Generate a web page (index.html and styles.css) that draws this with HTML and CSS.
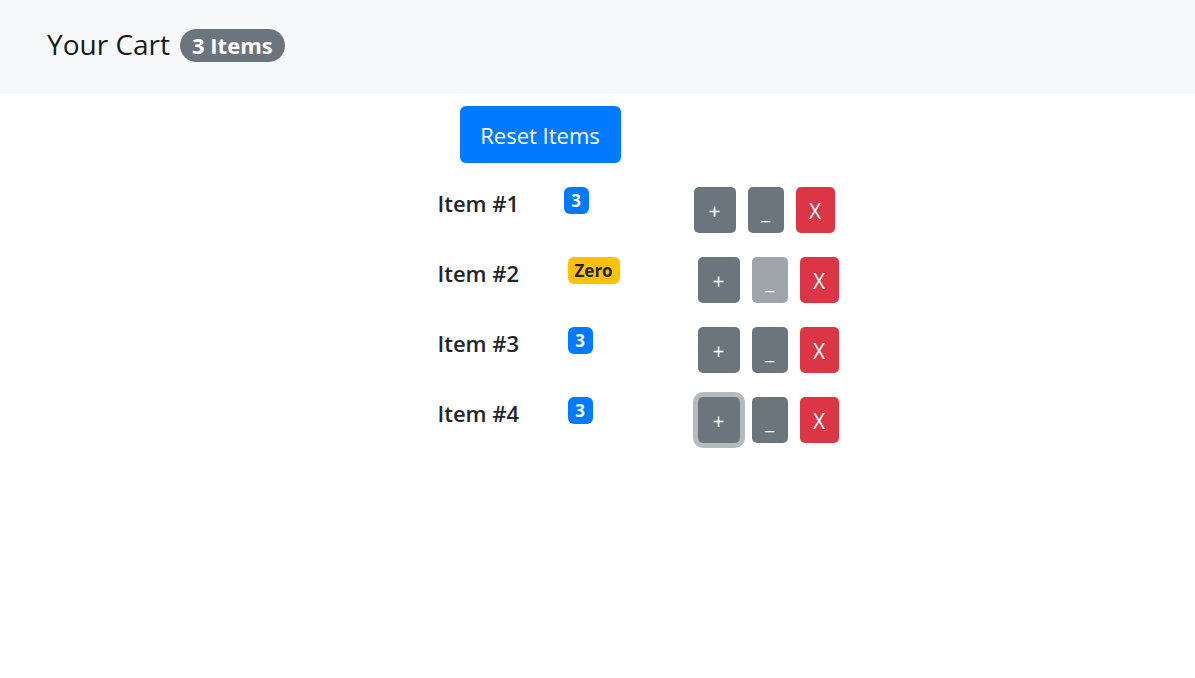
FILE: index.html
```html
<!DOCTYPE html>
<html lang="en">
<head>
<meta charset="utf-8">
<meta name="viewport" content="width=device-width, initial-scale=1">
<title>Your Cart</title>
<link rel="stylesheet" href="styles.css">
</head>
<body>
<header class="navbar">
  <h1 class="brand">Your Cart</h1>
  <span class="pill">3 Items</span>
</header>
<main class="cart">
  <button class="btn reset" type="button">Reset Items</button>
  <ul class="items">
    <li class="item">
      <h2 class="name">Item #1</h2>
      <span class="count"><span class="badge">3</span></span>
      <span class="actions">
        <button class="btn plus" type="button" aria-label="Add one Item #1">+</button>
        <button class="btn minus" type="button" aria-label="Remove one Item #1">_</button>
        <button class="btn delete" type="button" aria-label="Delete Item #1">X</button>
      </span>
    </li>
    <li class="item">
      <h2 class="name">Item #2</h2>
      <span class="count"><span class="badge zero">Zero</span></span>
      <span class="actions">
        <button class="btn plus" type="button" aria-label="Add one Item #2">+</button>
        <button class="btn minus" type="button" aria-label="Remove one Item #2" disabled>_</button>
        <button class="btn delete" type="button" aria-label="Delete Item #2">X</button>
      </span>
    </li>
    <li class="item">
      <h2 class="name">Item #3</h2>
      <span class="count"><span class="badge">3</span></span>
      <span class="actions">
        <button class="btn plus" type="button" aria-label="Add one Item #3">+</button>
        <button class="btn minus" type="button" aria-label="Remove one Item #3">_</button>
        <button class="btn delete" type="button" aria-label="Delete Item #3">X</button>
      </span>
    </li>
    <li class="item">
      <h2 class="name">Item #4</h2>
      <span class="count"><span class="badge">3</span></span>
      <span class="actions">
        <button class="btn plus focused" type="button" aria-label="Add one Item #4">+</button>
        <button class="btn minus" type="button" aria-label="Remove one Item #4">_</button>
        <button class="btn delete" type="button" aria-label="Delete Item #4">X</button>
      </span>
    </li>
  </ul>
</main>
</body>
</html>
```
FILE: styles.css
```css
* {
  box-sizing: border-box;
}

body {
  min-height: 100vh;
  margin: 0;
  font-family: "Segoe UI", "Open Sans", "Noto Sans", sans-serif;
  color: #212529;
  background: #fff;
}

.navbar {
  display: flex;
  align-items: flex-start;
  gap: 10px;
  padding: 23px 47px 29px;
  background: #f8f9fa;
}

.brand {
  margin: 0;
  font-size: 28px;
  font-weight: 400;
  line-height: 42px;
  color: #16181a;
}

.pill {
  margin-top: 6px;
  padding: 0 12px;
  border-radius: 17px;
  font-size: 22px;
  font-weight: 700;
  line-height: 33px;
  color: #fff;
  background: #6c757d;
}

.cart {
  width: fit-content;
  margin: 12px auto 0;
  padding: 0 0 24px 81px;
}

.btn {
  display: block;
  height: 46px;
  padding: 2px 0 0;
  border: 0;
  border-radius: 5px;
  font-family: inherit;
  font-size: 21px;
  line-height: 44px;
  color: #fff;
  background: #6c757d;
}

.reset {
  width: 161px;
  height: 57px;
  margin-left: 22px;
  border-radius: 6px;
  font-size: 22px;
  line-height: 55px;
  background: #007bff;
}

.items {
  display: grid;
  gap: 24px;
  margin: 24px 0 0;
  padding: 0;
  list-style: none;
}

.item {
  display: grid;
  grid-template-columns: 130px 130px auto;
  align-items: start;
}

.item:first-child {
  grid-template-columns: 126px 130px auto;
}

.name {
  margin: 0;
  font-size: 22px;
  font-weight: 600;
  line-height: 32px;
}

.count {
  display: flex;
}

.badge {
  min-width: 25px;
  padding: 0 7px;
  border-radius: 6px;
  font-size: 17px;
  font-weight: 700;
  line-height: 27px;
  text-align: center;
  color: #fff;
  background: #007bff;
}

.zero {
  color: #212529;
  background: #ffc107;
}

.actions {
  display: flex;
  gap: 12px;
}

.plus {
  width: 42px;
}

.minus {
  width: 36px;
}

.minus:disabled {
  opacity: 0.65;
}

.delete {
  width: 39px;
  background: #dc3545;
}

.focused {
  box-shadow: 0 0 0 5px #b5babe;
}
```
